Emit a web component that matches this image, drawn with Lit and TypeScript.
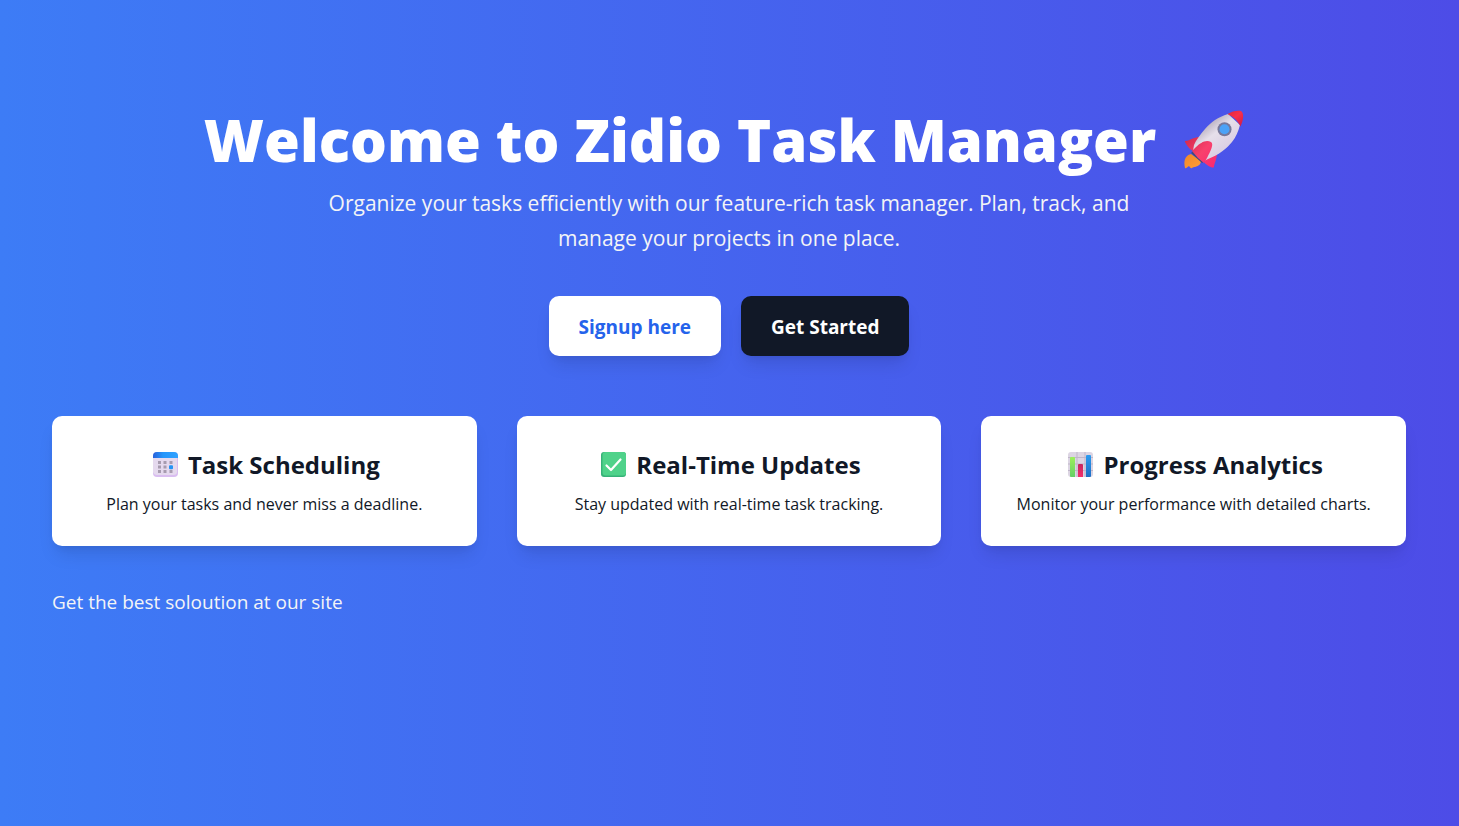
import { LitElement, html, css, svg } from "lit";
import { customElement } from "lit/decorators.js";

const rocket = svg`
  <defs>
    <linearGradient id="hull" x1="20" y1="16" x2="42" y2="44" gradientUnits="userSpaceOnUse">
      <stop offset="0" stop-color="#b9b0c0" /><stop offset=".35" stop-color="#e6dfea" /><stop offset="1" stop-color="#d9cce2" />
    </linearGradient>
    <linearGradient id="nose" x1="46" y1="2" x2="58" y2="16" gradientUnits="userSpaceOnUse">
      <stop offset="0" stop-color="#e8283f" /><stop offset=".4" stop-color="#f8304c" /><stop offset="1" stop-color="#d01c48" />
    </linearGradient>
    <linearGradient id="fin" x1="4" y1="30" x2="30" y2="56" gradientUnits="userSpaceOnUse">
      <stop offset="0" stop-color="#d92c50" /><stop offset=".5" stop-color="#f8406c" /><stop offset="1" stop-color="#fa2a70" />
    </linearGradient>
    <linearGradient id="flame" x1="4" y1="44" x2="14" y2="58" gradientUnits="userSpaceOnUse">
      <stop offset="0" stop-color="#f08a2c" /><stop offset="1" stop-color="#ff9c34" />
    </linearGradient>
  </defs>
  <path fill="url(#flame)" d="M7 44C2 45 -1 50 1 58C2 59 3 57 5 56C6 57 7 59 8 58C9 57 10 57 11 57C15 56 17 54 17 51Z" />
  <path fill="#3c4b80" d="M7 43L10 40L21 51L18 53Z" />
  <path fill="url(#fin)" d="M15 27C10 27 5 31 1 31C0 32 6 40 9 41L16 34Z" />
  <path fill="url(#fin)" d="M33 43C33 49 30 54 30 57C29 59 22 55 20 52L26 44Z" />
  <path fill="url(#hull)" d="M44 4C34 7 27 12 21 19C16 25 12 30 10 35L9 41L20 51L24 49C35 45 43 38 48 32C52 27 54 22 56 15Z" />
  <path fill="url(#nose)" d="M43.500 4C48 1 54 0 57 1C60 3 60 9 56.500 16.500C54 11 50 7 43.500 4Z" />
  <path fill="url(#fin)" d="M8 41L12 37C16 33 22 29 27 32C30 34 27 40 23 48L20 53Q13 48 8 41Z" />
  <circle cx="40.500" cy="19.300" r="7" fill="#77789a" />
  <circle cx="40.500" cy="19.300" r="5" fill="#4ba2f7" />
`;

const calendar = svg`
  <defs>
    <linearGradient id="top" x1="0" y1="0" x2="1" y2="0">
      <stop offset="0" stop-color="#2861db" /><stop offset=".4" stop-color="#2596fb" /><stop offset="1" stop-color="#30a2ff" />
    </linearGradient>
  </defs>
  <rect width="25" height="25" rx="4" fill="#d9bdf0" />
  <path fill="#e5d9ee" d="M0 5H24V20Q24 23 20 23H4Q1 23 0 20Z" />
  <path fill="url(#top)" d="M0 6V4Q0 0 4 0H21Q25 0 25 4V6Z" />
  <g fill="#a79baf">
    <rect x="5" y="9" width="3" height="3" /><rect x="10.500" y="9" width="3" height="3" /><rect x="16.500" y="9" width="3" height="3" />
    <rect x="5" y="13.500" width="3" height="3" /><rect x="10.500" y="13.500" width="3" height="3" />
    <rect x="5" y="18" width="3" height="3" /><rect x="10.500" y="18" width="3" height="3" /><rect x="16.500" y="18" width="3" height="3" />
  </g>
  <rect x="16" y="13.200" width="4" height="4" rx="1" fill="#2493f4" />
`;

const check = svg`
  <rect width="25" height="25" rx="3" fill="#36b278" />
  <rect x="1.500" y="0" width="23.500" height="23.500" rx="3" fill="#4fd28a" />
  <path d="M5.500 13.500L10 18L19.500 7.500" fill="none" stroke="#fff" stroke-width="2.200" stroke-linecap="round" stroke-linejoin="round" />
`;

const chart = svg`
  <defs>
    <linearGradient id="green" x1="0" y1="0" x2="0" y2="1"><stop offset="0" stop-color="#9df05a" /><stop offset="1" stop-color="#64cf68" /></linearGradient>
    <linearGradient id="pink" x1="0" y1="0" x2="0" y2="1"><stop offset="0" stop-color="#c4265f" /><stop offset="1" stop-color="#f52f6b" /></linearGradient>
    <linearGradient id="blue" x1="0" y1="0" x2="0" y2="1"><stop offset="0" stop-color="#2b9bf0" /><stop offset="1" stop-color="#1f6ec4" /></linearGradient>
  </defs>
  <rect width="25" height="25" rx="3" fill="#dcd5e3" />
  <path d="M0 5.500H25M0 12H25M0 18.500H25M9 0V25M17 0V25" stroke="#bfb5c9" stroke-width="1" />
  <path fill="url(#green)" d="M2 6Q2 5 3 5H6Q7 5 7 6V25H3Q2 25 2 24Z" />
  <path fill="url(#pink)" d="M10 13Q10 12 11 12H14Q15 12 15 13V25H10Z" />
  <path fill="url(#blue)" d="M18 4Q18 3 19 3H22Q23 3 23 4V24Q23 25 22 25H18Z" />
`;

const features = [
  { icon: calendar, title: "Task Scheduling", text: "Plan your tasks and never miss a deadline." },
  { icon: check, title: "Real-Time Updates", text: "Stay updated with real-time task tracking." },
  { icon: chart, title: "Progress Analytics", text: "Monitor your performance with detailed charts." },
];

@customElement("app-root")
export class AppRoot extends LitElement {
  static styles = css`
    :host {
      display: block;
      font-family: "Segoe UI", "Open Sans", "Noto Sans", sans-serif;
      color: #fff;
    }
    * {
      box-sizing: border-box;
      margin: 0;
    }
    .page {
      min-height: 100vh;
      padding: 102px 53px 40px 52px;
      background: linear-gradient(to right, #3d7cf6, #4d4ce7);
    }
    .hero {
      display: flex;
      flex-direction: column;
      align-items: center;
      text-align: center;
    }
    .title {
      display: flex;
      align-items: center;
      justify-content: center;
      gap: 28px;
      padding-right: 10px;
      font-size: 58px;
      font-weight: 800;
      line-height: 76px;
    }
    .rocket {
      flex: none;
      width: 60px;
      height: 60px;
    }
    .lead {
      max-width: 840px;
      margin-top: 8px;
      font-size: 21px;
      line-height: 35px;
      color: #f3f4f6;
    }
    .actions {
      display: flex;
      flex-wrap: wrap;
      justify-content: center;
      gap: 20px;
      margin-top: 40px;
    }
    .button {
      padding: 16px 30px 14px;
      border: 0;
      border-radius: 10px;
      background: #fff;
      color: #2563eb;
      font: inherit;
      font-size: 19px;
      font-weight: 700;
      line-height: 30px;
      box-shadow: 0 12px 18px -4px rgb(0 0 0 / 0.1), 0 5px 8px -5px rgb(0 0 0 / 0.1);
      cursor: pointer;
    }
    .dark {
      background: #111827;
      color: #fff;
    }
    .features {
      display: grid;
      grid-template-columns: repeat(3, 1fr);
      gap: 40px;
      margin-top: 60px;
    }
    .card {
      padding: 31px 24px 29px;
      border-radius: 10px;
      background: #fff;
      color: #111827;
      text-align: center;
      box-shadow: 0 12px 18px -4px rgb(0 0 0 / 0.1), 0 5px 8px -5px rgb(0 0 0 / 0.1);
    }
    .heading {
      display: flex;
      align-items: center;
      justify-content: center;
      gap: 10px;
      padding-left: 4px;
      font-size: 24px;
      font-weight: 700;
      line-height: 35px;
    }
    .icon {
      flex: none;
      width: 25px;
      height: 25px;
    }
    .text {
      margin-top: 10px;
      font-size: 16px;
      line-height: 25px;
    }
    .note {
      margin-top: 40px;
      font-size: 19px;
      line-height: 32px;
      color: #f3f4f6;
    }
    @media (max-width: 900px) {
      .features {
        grid-template-columns: 1fr;
      }
      .page {
        padding-inline: 24px;
      }
    }
  `;

  render() {
    return html`
      <main class="page">
        <section class="hero">
          <h1 class="title">
            <span>Welcome to Zidio Task Manager</span>
            <svg class="rocket" viewBox="0 0 60 60" aria-hidden="true">${rocket}</svg>
          </h1>
          <p class="lead">
            Organize your tasks efficiently with our feature-rich task manager. Plan, track, and manage your projects in one place.
          </p>
          <div class="actions">
            <button class="button" type="button">Signup here</button>
            <button class="button dark" type="button">Get Started</button>
          </div>
        </section>
        <section class="features">
          ${features.map(
            (f) => html`
              <article class="card">
                <h2 class="heading">
                  <svg class="icon" viewBox="0 0 25 25" aria-hidden="true">${f.icon}</svg>
                  <span>${f.title}</span>
                </h2>
                <p class="text">${f.text}</p>
              </article>
            `
          )}
        </section>
        <p class="note">Get the best soloution at our site</p>
      </main>
    `;
  }
}
